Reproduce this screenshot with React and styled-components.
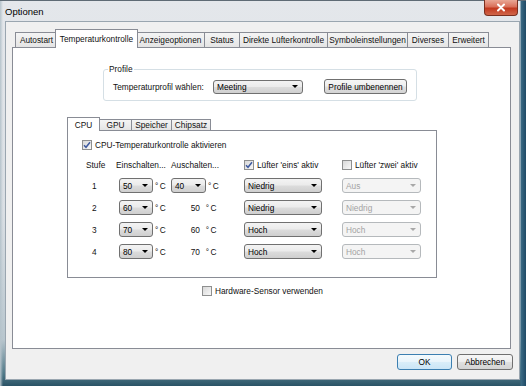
import React from 'react';
import styled, { createGlobalStyle, css } from 'styled-components';

const FONT = `"Liberation Sans", Arial, sans-serif`;

const Global = createGlobalStyle`
  html, body { margin: 0; padding: 0; width: 526px; height: 386px; overflow: hidden; background: #6b8796; }
  * { box-sizing: border-box; }
  body { font-family: ${FONT}; font-size: 8.3px; color: #111; }
`;

const Window = styled.div`
  width: 526px;
  height: 386px;
  display: flex;
  flex-direction: column;
  padding: 0 6px 6px 5px;
  border-top: 1px solid #5f6b75;
  background:
    linear-gradient(to right, #b5c3cb 0, rgba(0,0,0,0) 3px, rgba(0,0,0,0) 520px, #3a6a84 521px, #1f4a66 526px),
    linear-gradient(to bottom, #e4e7eb 0, #dadfe4 55%, #b8c6ce 88%, #4f7887 97%, #2a5366 100%);
`;

const TitleBar = styled.div`
  height: 20px;
  display: flex;
  align-items: flex-start;
`;

const Title = styled.div`
  font-size: 9.5px;
  padding-top: 5px;
  color: #000;
`;

const CloseButton = styled.div`
  margin-left: auto;
  margin-right: 2px;
  margin-top: -1px;
  width: 34px;
  height: 16px;
  border: 1px solid #7a2f1f;
  border-top: none;
  border-radius: 0 0 4px 4px;
  background: linear-gradient(#e9a795 0%, #d9705a 45%, #c2391f 55%, #d0664a 100%);
  display: flex;
  align-items: center;
  justify-content: center;
`;

const Client = styled.div`
  flex: 1;
  display: flex;
  flex-direction: column;
  background: #f0f0f0;
  border: 1px solid #9aa6b0;
  padding: 7px 8px 0 6px;
`;

const TabStrip = styled.div`
  display: flex;
  align-items: flex-end;
  height: ${p => p.$h}px;
  padding-left: ${p => p.$pad}px;
  position: relative;
  z-index: 1;
`;

const Tab = styled.div`
  width: ${p => p.$w}px;
  height: ${p => p.$h}px;
  margin-right: -1px;
  border: 1px solid #898c95;
  border-bottom: none;
  background: linear-gradient(#f4f4f4, #ededed 50%, #e4e4e4 100%);
  display: flex;
  align-items: center;
  justify-content: center;
  white-space: nowrap;
  ${p => p.$active && css`
    background: #fff;
    height: ${p.$ah}px;
    margin-bottom: -1px;
    margin-left: ${p.$ml}px;
    margin-right: ${p.$mr}px;
    position: relative;
    z-index: 2;
  `}
`;

const Panel = styled.div`
  width: ${p => p.$w}px;
  height: ${p => p.$h}px;
  border: 1px solid #898c95;
  background: #fff;
  display: flex;
  flex-direction: column;
  align-items: flex-start;
`;

const GroupBox = styled.div`
  position: relative;
  margin: 21px 0 0 90px;
  width: 314px;
  height: 32px;
  border: 1px solid #d5dfe5;
  border-radius: 3px;
  display: flex;
  align-items: center;
  padding: 3px 0 0 9px;
`;

const Legend = styled.span`
  position: absolute;
  left: 4px;
  top: -6px;
  padding: 0 1px;
  background: #fff;
`;

const FieldLabel = styled.span`
  width: 100px;
`;

const SelectBox = styled.div`
  width: ${p => p.$w}px;
  height: ${p => p.$h || 15}px;
  border: 1px solid #707070;
  border-radius: 3px;
  background: linear-gradient(#f3f3f3 0%, #ebebeb 48%, #dcdcdc 52%, #cfcfcf 100%);
  display: flex;
  align-items: center;
  padding: 0 4px 0 3px;
  color: #000;
  ${p => p.$disabled && css`
    border-color: #b5b9bc;
    background: #f4f4f4;
    color: #a3a3a3;
  `}
`;

const SelectText = styled.span`
  flex: 1;
`;

const Arrow = styled.span`
  width: 0;
  height: 0;
  border-left: 3px solid transparent;
  border-right: 3px solid transparent;
  border-top: 3px solid ${p => (p.$disabled ? '#a8a8a8' : '#000')};
`;

const Button = styled.div`
  width: ${p => p.$w}px;
  height: ${p => p.$h || 16}px;
  margin-left: ${p => p.$ml || 0}px;
  border: 1px solid #707070;
  border-radius: 3px;
  background: linear-gradient(#f6f6f6 0%, #eeeeee 48%, #e0e0e0 52%, #d4d4d4 100%);
  display: flex;
  align-items: center;
  justify-content: center;
  color: #000;
  ${p => p.$default && css`
    border-color: #3c7fb1;
    background: linear-gradient(#f4fafd 0%, #e9f4fb 48%, #d9edf9 52%, #cbe5f6 100%);
  `}
`;

const InnerTabs = styled.div`
  margin: 16px 0 0 54px;
  display: flex;
  flex-direction: column;
`;

const CheckRow = styled.label`
  display: flex;
  align-items: center;
  gap: 3px;
  height: 12px;
  margin: ${p => p.$m || '0'};
  white-space: nowrap;
`;

const Box = styled.span`
  width: 10px;
  height: 10px;
  border: 1px solid #8e8f8f;
  background: linear-gradient(135deg, #d8d8d8, #f8f8f8);
  display: flex;
  align-items: center;
  justify-content: center;
`;

const FanGrid = styled.div`
  display: grid;
  grid-template-columns: 30px 55px 73px 98px 80px;
  grid-template-rows: 12px repeat(4, 15px);
  row-gap: 7px;
  margin: 8px 0 0 18px;
  align-items: center;
`;

const HeadCell = styled.div`
  white-space: nowrap;
`;

const StepCell = styled.div`
  padding-left: 6px;
`;

const TempCell = styled.div`
  display: flex;
  align-items: center;
  gap: 2px;
  padding-left: ${p => p.$pl || 0}px;
  justify-content: ${p => (p.$right ? 'flex-end' : 'flex-start')};
  width: ${p => (p.$right ? '47px' : 'auto')};
`;

const Unit = styled.span`
  letter-spacing: 1.5px;
  white-space: nowrap;
`;

const Footer = styled.div`
  display: flex;
  justify-content: flex-end;
  margin: 5px -2px 0 0;
`;

function Select({ w, h, value, disabled }) {
  return (
    <SelectBox $w={w} $h={h} $disabled={disabled}>
      <SelectText>{value}</SelectText>
      <Arrow $disabled={disabled} />
    </SelectBox>
  );
}

function Check({ checked, label, m }) {
  return (
    <CheckRow $m={m}>
      <Box>
        {checked && (
          <svg width="8" height="8" viewBox="0 0 8 8">
            <path d="M1 4.2 L3 6.3 L7 1.2" fill="none" stroke="#3e5aa0" strokeWidth="1.5" />
          </svg>
        )}
      </Box>
      <span>{label}</span>
    </CheckRow>
  );
}

const mainTabs = [
  ['Autostart', 43],
  ['Temperaturkontrolle', 83],
  ['Anzeigeoptionen', 69],
  ['Status', 36],
  ['Direkte Lüfterkontrolle', 89],
  ['Symboleinstellungen', 81],
  ['Diverses', 42],
  ['Erweitert', 41],
];

const innerTabs = [
  ['CPU', 33],
  ['GPU', 33],
  ['Speicher', 41],
  ['Chipsatz', 40],
];

const rows = [
  { step: 1, on: '50', off: '40', f1: 'Niedrig', f2: 'Aus' },
  { step: 2, on: '60', off: '50', f1: 'Niedrig', f2: 'Niedrig' },
  { step: 3, on: '70', off: '60', f1: 'Hoch', f2: 'Hoch' },
  { step: 4, on: '80', off: '70', f1: 'Hoch', f2: 'Hoch' },
];

export default function App() {
  return (
    <>
      <Global />
      <Window>
        <TitleBar>
          <Title>Optionen</Title>
          <CloseButton>
            <svg width="10" height="9" viewBox="0 0 10 9">
              <path d="M2 1.5 L8 7.5 M8 1.5 L2 7.5" stroke="#fff" strokeWidth="2" strokeLinecap="round" />
            </svg>
          </CloseButton>
        </TitleBar>
        <Client>
          <TabStrip $h={18} $pad={3}>
            {mainTabs.map(([t, w], i) => (
              <Tab key={t} $w={w} $h={15} $ah={19} $ml={-2} $mr={-2} $active={i === 1}>{t}</Tab>
            ))}
          </TabStrip>
          <Panel $w={499} $h={302}>
            <GroupBox>
              <Legend>Profile</Legend>
              <FieldLabel>Temperaturprofil wählen:</FieldLabel>
              <Select w={90} h={14} value="Meeting" />
              <Button $w={83} $h={15} $ml={21}>Profile umbenennen</Button>
            </GroupBox>
            <InnerTabs>
              <TabStrip $h={13} $pad={0}>
                {innerTabs.map(([t, w], i) => (
                  <Tab key={t} $w={w} $h={11} $ah={14} $ml={0} $mr={-1} $active={i === 0}>{t}</Tab>
                ))}
              </TabStrip>
              <Panel $w={370} $h={148}>
                <Check checked label="CPU-Temperaturkontrolle aktivieren" m="8px 0 0 14px" />
                <FanGrid>
                  <HeadCell>Stufe</HeadCell>
                  <HeadCell>Einschalten...</HeadCell>
                  <HeadCell>Auschalten...</HeadCell>
                  <Check checked label="Lüfter 'eins' aktiv" />
                  <Check label="Lüfter 'zwei' aktiv" />
                  {rows.map(r => (
                    <React.Fragment key={r.step}>
                      <StepCell>{r.step}</StepCell>
                      <TempCell $pl={3}>
                        <Select w={34} value={r.on} />
                        <Unit>°C</Unit>
                      </TempCell>
                      {r.step === 1 ? (
                        <TempCell>
                          <Select w={35} value={r.off} />
                          <Unit>°C</Unit>
                        </TempCell>
                      ) : (
                        <TempCell $right>
                          <span>{r.off}</span>
                          <Unit>&nbsp;°C</Unit>
                        </TempCell>
                      )}
                      <Select w={78} value={r.f1} />
                      <Select w={79} value={r.f2} disabled />
                    </React.Fragment>
                  ))}
                </FanGrid>
              </Panel>
            </InnerTabs>
            <Check label="Hardware-Sensor verwenden" m="7px 0 0 189px" />
          </Panel>
          <Footer>
            <Button $w={55} $default>OK</Button>
            <Button $w={56} $ml={5}>Abbrechen</Button>
          </Footer>
        </Client>
      </Window>
    </>
  );
}
